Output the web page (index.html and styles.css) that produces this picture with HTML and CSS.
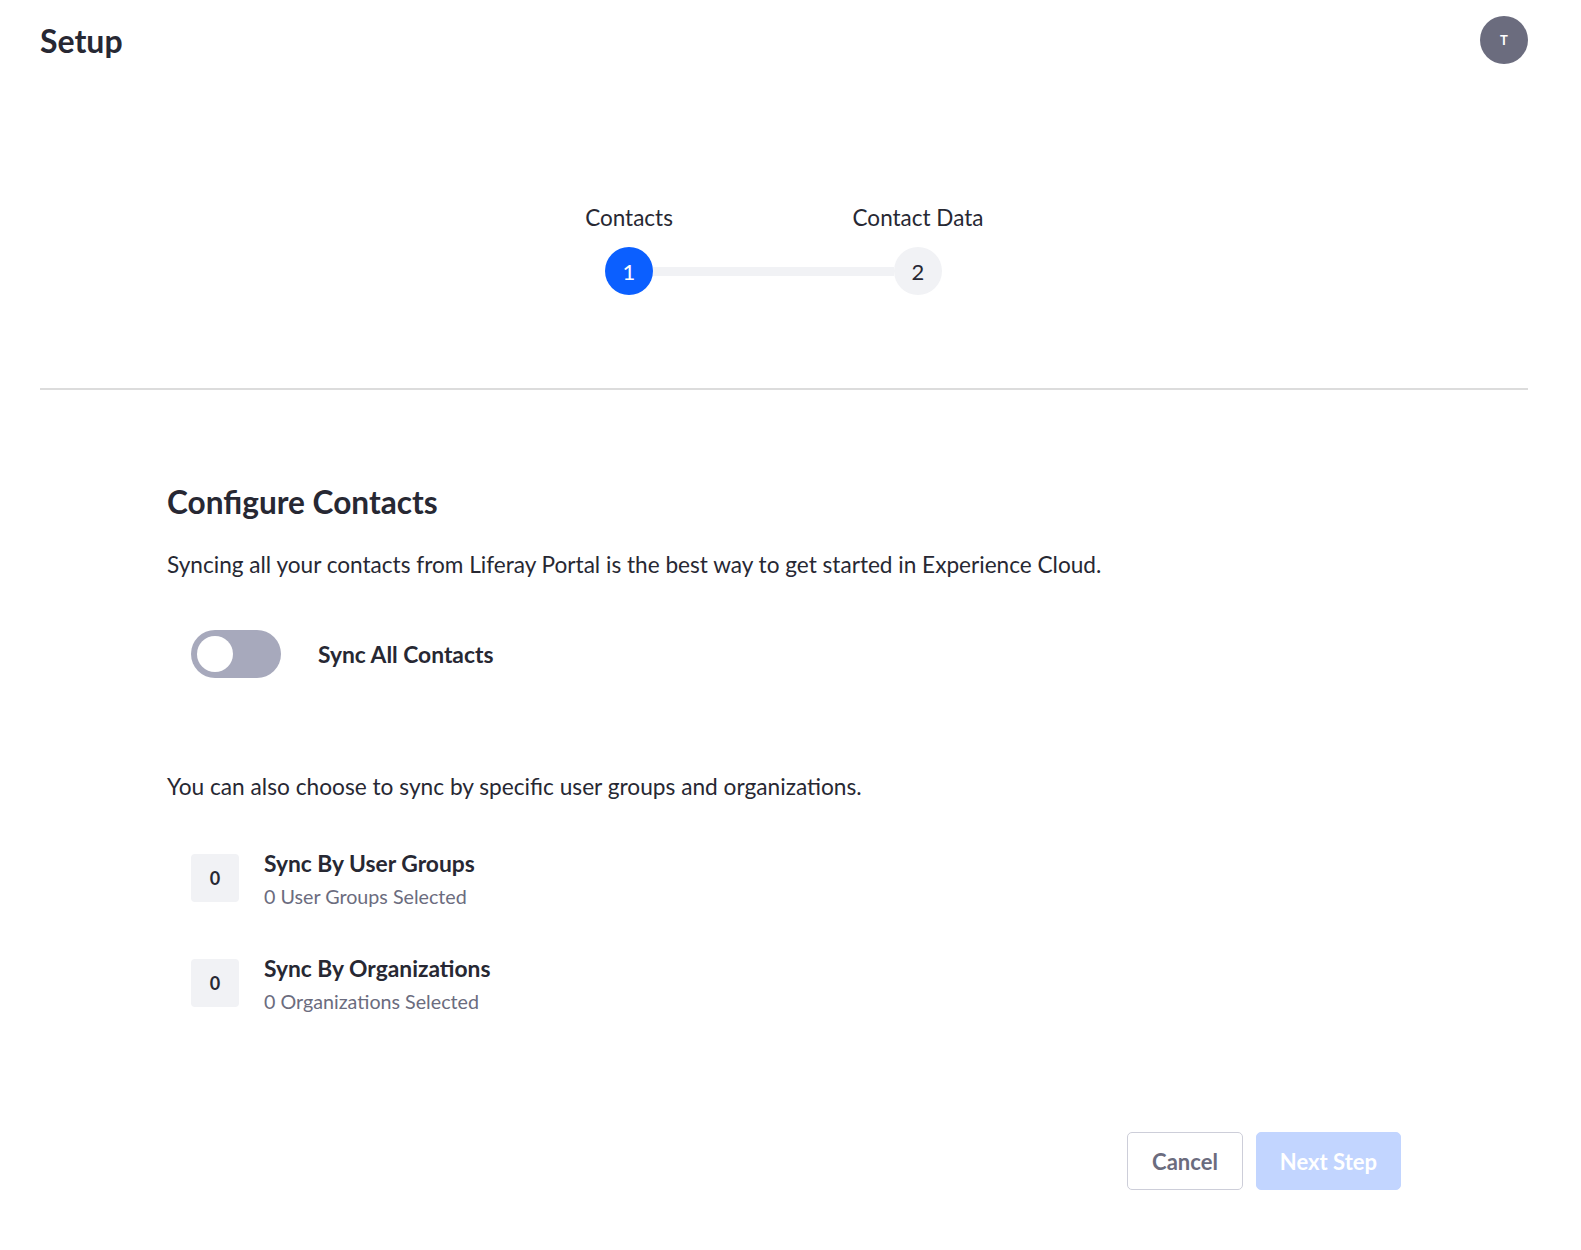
FILE: index.html
```html
<!DOCTYPE html>
<html lang="en">
<head>
<meta charset="utf-8">
<title>Setup</title>
<link rel="stylesheet" href="styles.css">
</head>
<body>
<div class="page">
  <header class="header">
    <h1 class="title">Setup</h1>
    <div class="avatar">T</div>
  </header>

  <div class="stepper">
    <div class="step">
      <div class="step-label">Contacts</div>
      <div class="step-dot active">1</div>
    </div>
    <div class="step-line"></div>
    <div class="step">
      <div class="step-label">Contact Data</div>
      <div class="step-dot">2</div>
    </div>
  </div>

  <hr class="divider">

  <main class="content">
    <h2 class="heading">Configure Contacts</h2>
    <p class="text">Syncing all your contacts from Liferay Portal is the best way to get started in Experience Cloud.</p>

    <label class="toggle-row">
      <span class="toggle"><span class="knob"></span></span>
      <span class="toggle-label">Sync All Contacts</span>
    </label>

    <p class="text text-second">You can also choose to sync by specific user groups and organizations.</p>

    <div class="sync-item">
      <div class="count">0</div>
      <div class="sync-info">
        <div class="sync-title">Sync By User Groups</div>
        <div class="sync-sub">0 User Groups Selected</div>
      </div>
    </div>

    <div class="sync-item">
      <div class="count">0</div>
      <div class="sync-info">
        <div class="sync-title">Sync By Organizations</div>
        <div class="sync-sub">0 Organizations Selected</div>
      </div>
    </div>

    <div class="actions">
      <button class="btn btn-secondary" type="button">Cancel</button>
      <button class="btn btn-primary" type="button" disabled>Next Step</button>
    </div>
  </main>
</div>
</body>
</html>
```

FILE: styles.css
```css
* { box-sizing: border-box; }

body {
  margin: 0;
  background: #ffffff;
  color: #272833;
  font-family: "Source Sans Pro", Lato, "Noto Sans", sans-serif;
}

.page {
  padding: 0 53px 0 40px;
}

.header {
  height: 80px;
  display: flex;
  align-items: center;
  justify-content: space-between;
}

.title {
  margin: 0;
  font-size: 32px;
  font-weight: 700;
  line-height: 1;
  padding-top: 2px;
}

.avatar {
  width: 48px;
  height: 48px;
  border-radius: 50%;
  background: #6b6c7e;
  color: #ffffff;
  font-size: 13px;
  font-weight: 700;
  display: flex;
  align-items: center;
  justify-content: center;
}

.stepper {
  display: flex;
  align-items: flex-end;
  justify-content: center;
  margin: 124px 21px 0 0;
}

.step {
  width: 48px;
  display: flex;
  flex-direction: column;
  align-items: center;
}

.step-label {
  white-space: nowrap;
  font-size: 22.5px;
  line-height: 28px;
  margin-bottom: 15px;
}

.step-dot {
  width: 48px;
  height: 48px;
  border-radius: 50%;
  background: #f1f2f5;
  color: #272833;
  font-size: 22px;
  display: flex;
  align-items: center;
  justify-content: center;
}

.step-dot.active {
  background: #0b5fff;
  color: #ffffff;
}

.step-line {
  width: 241px;
  height: 9px;
  margin: 0 0 19px;
  background: #f1f2f5;
}

.divider {
  margin: 93px 0 0;
  border: 0;
  border-top: 2px solid #dcdcdc;
  height: 0;
}

.content {
  padding: 0 127px;
}

.heading {
  margin: 92px 0 0;
  font-size: 31.6px;
  font-weight: 700;
  line-height: 40px;
}

.text {
  margin: 28px 0 0;
  font-size: 22.6px;
  line-height: 30px;
}

.toggle-row {
  display: flex;
  align-items: center;
  margin: 50px 0 0 24px;
  gap: 37px;
}

.toggle {
  width: 90px;
  height: 48px;
  border-radius: 24px;
  background: #a7a9bc;
  padding: 6px;
  display: flex;
}

.knob {
  width: 36px;
  height: 36px;
  border-radius: 50%;
  background: #ffffff;
}

.toggle-label {
  font-size: 22.8px;
  font-weight: 700;
}

.text-second {
  margin-top: 94px;
  font-size: 22.7px;
}

.sync-item {
  display: flex;
  align-items: flex-start;
  margin: 52px 0 0 24px;
  gap: 25px;
}

.sync-item + .sync-item {
  margin-top: 47px;
}

.count {
  width: 48px;
  height: 48px;
  border-radius: 4px;
  background: #f1f2f5;
  font-size: 18px;
  font-weight: 700;
  display: flex;
  align-items: center;
  justify-content: center;
}

.sync-info {
  display: flex;
  flex-direction: column;
}

.sync-title {
  font-size: 22.8px;
  font-weight: 700;
  line-height: 30px;
  margin-top: -6px;
}

.sync-sub {
  font-size: 19.7px;
  line-height: 30px;
  margin-top: 4px;
  color: #6b6c7e;
}

.actions {
  display: flex;
  justify-content: flex-end;
  gap: 13px;
  margin-top: 115px;
}

.btn {
  height: 58px;
  border-radius: 5px;
  font-family: inherit;
  font-size: 22px;
  font-weight: 700;
  padding: 0 24px;
}

.btn-secondary {
  background: #ffffff;
  border: 1px solid #cdced9;
  color: #6b6c7e;
}

.btn-primary {
  padding: 0 23px;
  background: #c2d5ff;
  border: 1px solid #c2d5ff;
  color: #ffffff;
}
```
